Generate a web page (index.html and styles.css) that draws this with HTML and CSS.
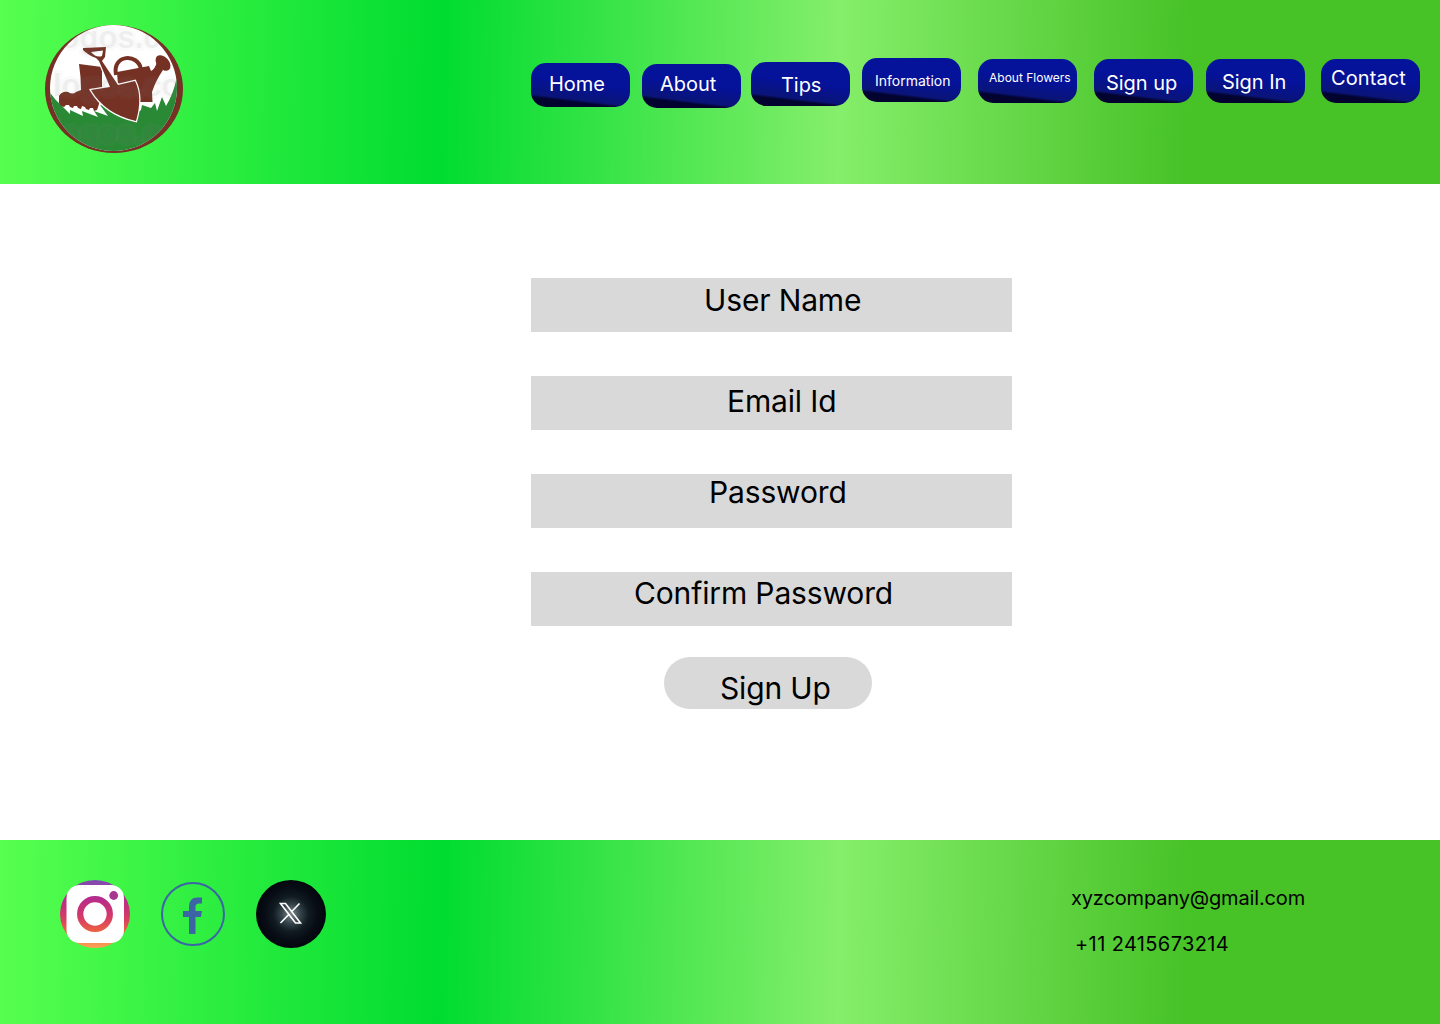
FILE: index.html
```html
<!DOCTYPE html>
<html lang="en">
<head>
<meta charset="utf-8">
<title>Sign Up</title>
<link rel="stylesheet" href="styles.css">
</head>
<body>
<header class="bar header">
  <svg class="logo" width="138" height="128" viewBox="0 0 138 128" role="img" aria-label="Garden tools">
    <defs><clipPath id="disc-clip"><ellipse cx="68.500" cy="63" rx="63.500" ry="63"/></clipPath></defs>
    <ellipse cx="69" cy="64" rx="69" ry="64" fill="#753125"/>
    <g clip-path="url(#disc-clip)">
      <rect width="138" height="128" fill="#fff"/>
      <path d="M0 64L6 69Q11 76 16 80L25 89L25 85L38 91L37 86L53 92L49 86L63 91L55 80L92 88L96 85L97 80L106 83L110 78L112 86L117 72L121 81Q128 70 132 52L138 40V128H0Z" fill="#2a8936"/>
    </g>
    <g fill="#753125">
      <path d="M34 39L57 42L57 62L54 79L52 85L49 86L48 83L45 83L44 85L41 84L40 82L37 81L36 84L33 83L32 81L29 81L28 83L25 82L24 80L21 80L19 82L16 81L14 78V71Q17 66 23 67Q28 70 31 67L36 65Q36 52 34 39Z"/>
      <path d="M72 47L104 41L106 46Q110 44 112 37L118 45Q111 55 107 67L107.500 77H84L73 60Z"/>
      <path d="M71 50C67 29 93 28 96 44" fill="none" stroke="#753125" stroke-width="4"/>
      <ellipse cx="118" cy="38" rx="9" ry="6" transform="rotate(48 118 38)"/>
      <path class="shovel" d="M46 65L65 62L54 36L51 33Q43 30 38 25V23L61 22L60 32L57 36L73 60L90 56Q98 72 91 96Q60 89 46 65Z"/>
      <path d="M46 27L58 25.500L57 31Q51 33 46 27Z" fill="#fff"/>
    </g>
    <g class="watermark" clip-path="url(#disc-clip)"><text x="7" y="23">logos.co</text><text x="8" y="71">logos.co</text><text x="7" y="118">logos.co</text></g>
  </svg>
  <nav class="nav">
    <a class="pill home">Home</a>
    <a class="pill about">About</a>
    <a class="pill tips">Tips</a>
    <a class="pill information">Information</a>
    <a class="pill flowers">About Flowers</a>
    <a class="pill signup">Sign up</a>
    <a class="pill signin">Sign In</a>
    <a class="pill contact">Contact</a>
  </nav>
</header>
<main class="main">
  <form class="form">
    <label class="field username">User Name</label>
    <label class="field email">Email Id</label>
    <label class="field password">Password</label>
    <label class="field confirm">Confirm Password</label>
    <button class="submit" type="button">Sign Up</button>
  </form>
</main>
<footer class="bar footer">
  <div class="social">
    <svg class="instagram" width="70" height="68" viewBox="0 0 70 68">
      <defs><linearGradient id="ig" x2="0" y2="68" gradientUnits="userSpaceOnUse"><stop stop-color="#7d4db3"/><stop offset=".28" stop-color="#b82b8a"/><stop offset=".55" stop-color="#d63a67"/><stop offset=".8" stop-color="#f06a3a"/><stop offset="1" stop-color="#fca55a"/></linearGradient></defs>
      <ellipse cx="35" cy="34" rx="35" ry="34" fill="url(#ig)"/>
      <rect x="6.500" y="5" width="57.500" height="58" rx="13" fill="#fff"/>
      <circle cx="35" cy="34" r="14.800" fill="none" stroke="url(#ig)" stroke-width="6.300"/>
      <circle cx="53.700" cy="15.500" r="4.400" fill="#a93691"/>
    </svg>
    <svg class="facebook" width="64" height="64" viewBox="0 0 64 64">
      <circle cx="32" cy="32" r="31" fill="none" stroke="#3c65a6" stroke-width="2"/>
      <path d="M28 52V35H22V29H28V25Q28 15.500 36 15.500H41V21.500H38Q34.500 21.500 34.500 25V29H41L40 35H34.500V52Z" fill="#3c65a6"/>
    </svg>
    <svg class="x" width="70" height="68" viewBox="0 0 70 68">
      <defs><radialGradient id="glow" cx="35" cy="34" r="35" gradientUnits="userSpaceOnUse"><stop stop-color="#7c8a8e"/><stop offset=".28" stop-color="#344349"/><stop offset=".5" stop-color="#111b22"/><stop offset=".75" stop-color="#080d15"/><stop offset="1" stop-color="#03050c"/></radialGradient></defs>
      <ellipse cx="35" cy="34" rx="35" ry="34" fill="url(#glow)"/>
      <path d="M24.500 23.500H29.500L44.500 43H39.500ZM43.500 23.500L35.500 31.800M32.800 34.500L24.500 43" fill="none" stroke="#fff" stroke-width="1.600"/>
    </svg>
  </div>
  <address class="address"><span>xyzcompany@gmail.com</span><span class="phone">+11 2415673214</span></address>
</footer>
</body>
</html>
```
FILE: styles.css
```css
* { box-sizing: border-box; }
body { margin: 0; height: 1024px; display: flex; flex-direction: column; background: #fff; font-family: Inter, sans-serif; color: #000; }
.bar { height: 184px; flex: none; display: flex; justify-content: space-between; align-items: flex-start; background: linear-gradient(91deg, #57ff4f 0%, #00dc30 30.600%, #85ee6a 58.200%, #47c227 82.500%); }
.header { padding: 25px 20px 0 45px; }
.logo { display: block; }
.shovel { stroke: #fff; stroke-width: 2.500px; paint-order: stroke; }
.watermark { font: bold 31px "Liberation Sans", sans-serif; fill: #777; opacity: .12; stroke: #aaa; stroke-opacity: .4; stroke-width: 6px; stroke-linejoin: round; paint-order: stroke; }
.nav { display: flex; align-items: flex-start; padding-top: 33px; }
.pill { width: 99px; height: 44px; border-radius: 15px; color: #fff; font-size: 20px; line-height: 24px; letter-spacing: -.05px; white-space: nowrap; background: linear-gradient(187deg, #05129a 0%, #05129a 45%, #0a1478 77%, #02032e 82%, #02032e 100%); }
.home { margin-top: 5px; padding: 9px 0 0 18px; }
.about { margin: 6px 0 0 12px; padding: 8px 0 0 18px; letter-spacing: 0; }
.tips { margin: 4px 0 0 10px; padding: 11px 0 0 30px; }
.information { margin-left: 12px; padding: 11px 0 0 13px; font-size: 14px; letter-spacing: 0; }
.flowers { margin: 1px 0 0 17px; padding: 7px 0 0 11px; font-size: 12px; letter-spacing: 0; }
.signup { margin: 1px 0 0 17px; padding: 12px 0 0 12px; }
.signin { margin: 1px 0 0 13px; padding: 11px 0 0 16px; }
.contact { margin: 1px 0 0 16px; padding: 7px 0 0 10px; letter-spacing: .08px; }
.main { flex: 1; padding: 94px 0 0 531px; }
.form { width: 481px; display: flex; flex-direction: column; gap: 44px; }
.field { height: 54px; background: #d9d9d9; font-size: 30px; line-height: 36px; letter-spacing: -.14px; white-space: nowrap; }
.username { padding: 4px 0 0 173px; }
.email { padding: 7px 0 0 196px; }
.password { padding: 0 0 0 178px; }
.confirm { padding: 3px 0 0 103px; }
.submit { width: 208px; height: 52px; margin: -13px 0 0 133px; border: 0; border-radius: 26px; background: #d9d9d9; color: #000; font: 30px/36px Inter, sans-serif; letter-spacing: -.14px; text-align: left; padding: 13px 0 3px 56px; }
.footer { padding: 40px 0 0 60px; }
.social { display: flex; }
.facebook { margin: 2px 0 0 31px; }
.x { margin-left: 31px; }
.address { width: 369px; padding-top: 6px; display: flex; flex-direction: column; gap: 22px; font-style: normal; font-size: 20px; line-height: 24px; letter-spacing: -.15px; }
.phone { padding-left: 4px; letter-spacing: .38px; }
```
